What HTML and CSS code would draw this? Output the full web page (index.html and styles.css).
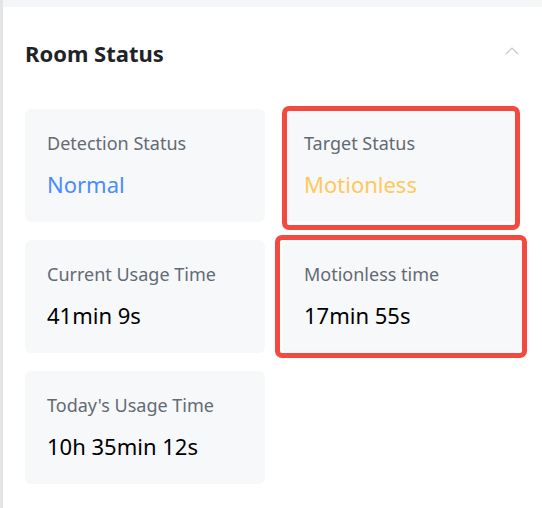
FILE: index.html
```html
<!DOCTYPE html>
<html>
<head>
<meta charset="utf-8">
<link rel="stylesheet" href="styles.css">
</head>
<body>
<div class="page">
  <section class="panel">
    <header class="panel-head">
      <h2 class="panel-title">Room Status</h2>
      <svg class="chevron" width="14" height="8" viewBox="0 0 14 8"><path d="M1 7 L7 1 L13 7" fill="none" stroke="#c4c7ce" stroke-width="1.2"/></svg>
    </header>
    <div class="grid">
      <div class="card">
        <div class="label">Detection Status</div>
        <div class="value blue">Normal</div>
      </div>
      <div class="card mark mark-a">
        <div class="label">Target Status</div>
        <div class="value yellow">Motionless</div>
      </div>
      <div class="card">
        <div class="label">Current Usage Time</div>
        <div class="value">41min 9s</div>
      </div>
      <div class="card mark mark-b">
        <div class="label">Motionless time</div>
        <div class="value">17min 55s</div>
      </div>
      <div class="card">
        <div class="label">Today's Usage Time</div>
        <div class="value">10h 35min 12s</div>
      </div>
    </div>
  </section>
</div>
</body>
</html>
```
FILE: styles.css
```css
html, body {
  margin: 0;
  padding: 0;
}
body {
  width: 542px;
  height: 508px;
  overflow: hidden;
  background: #f5f6f8;
  font-family: "Noto Sans", "Open Sans", sans-serif;
}
.page {
  padding-top: 7px;
  border-left: 3px solid #e4e5e7;
  height: 501px;
}
.panel {
  background: #ffffff;
  height: 100%;
  padding: 31px 0 0 22px;
  box-sizing: border-box;
}
.panel-head {
  display: flex;
  align-items: flex-start;
  justify-content: space-between;
  width: 494px;
  height: 30px;
}
.panel-title {
  margin: 0;
  font-size: 22px;
  line-height: 30px;
  font-weight: 700;
  color: #1f2329;
}
.chevron {
  display: block;
  margin-top: 9px;
}
.grid {
  margin-top: 41px;
  display: grid;
  grid-template-columns: 240px 240px;
  column-gap: 17px;
  row-gap: 18px;
}
.card {
  position: relative;
  height: 113px;
  box-sizing: border-box;
  background: #f7f8fa;
  border-radius: 6px;
  padding: 22px 22px 0 22px;
}
.label {
  font-size: 18px;
  line-height: 24px;
  color: #646a73;
}
.value {
  margin-top: 14px;
  font-size: 22px;
  line-height: 30px;
  color: #000000;
}
.value.blue { color: #4a8cff; }
.value.yellow { color: #ffc95a; }
.mark::after {
  content: "";
  position: absolute;
  border: 5px solid #f24a40;
  border-radius: 7px;
  pointer-events: none;
}
.mark-a::after {
  left: 0;
  top: -3px;
  right: 2px;
  bottom: -8px;
}
.mark-b::after {
  left: -7px;
  top: -5px;
  right: -5px;
  bottom: -5px;
}
```
